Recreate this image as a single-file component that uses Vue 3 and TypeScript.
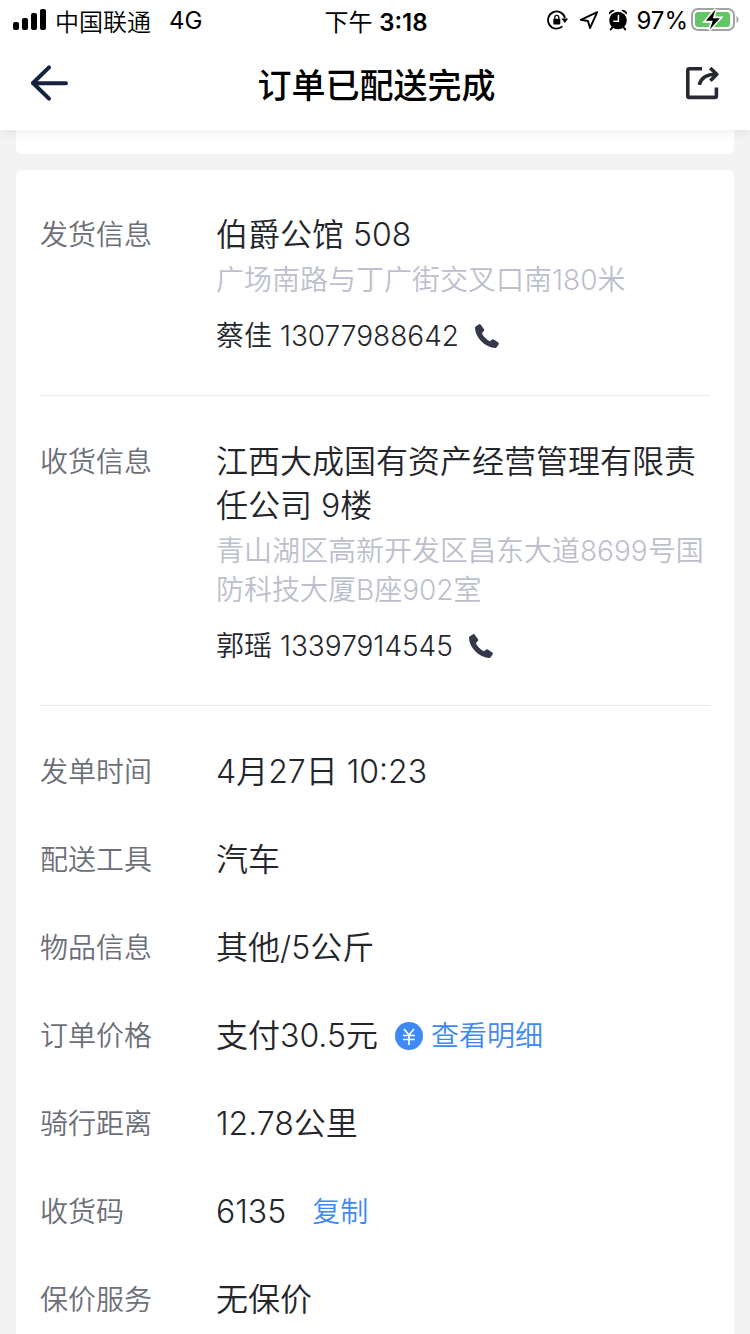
<script setup lang="ts">
interface Contact {
  label: string
  place: string
  address: string
  name: string
  phone: string
}
interface Detail {
  label: string
  value: string
  action?: string
  icon?: boolean
}

const contacts: Contact[] = [
  { label: '发货信息', place: '伯爵公馆 508', address: '广场南路与丁广街交叉口南180米', name: '蔡佳', phone: '13077988642' },
  { label: '收货信息', place: '江西大成国有资产经营管理有限责任公司 9楼', address: '青山湖区高新开发区昌东大道8699号国防科技大厦B座902室', name: '郭瑶', phone: '13397914545' },
]

const details: Detail[] = [
  { label: '发单时间', value: '4月27日 10:23' },
  { label: '配送工具', value: '汽车' },
  { label: '物品信息', value: '其他/5公斤' },
  { label: '订单价格', value: '支付30.5元', action: '查看明细', icon: true },
  { label: '骑行距离', value: '12.78公里' },
  { label: '收货码', value: '6135', action: '复制' },
  { label: '保价服务', value: '无保价' },
]
</script>

<template>
  <div class="page">
    <header class="top">
      <div class="status">
        <div class="status-side">
          <svg class="signal" width="34" height="22" viewBox="0 0 34 22">
            <rect x="0" y="13" width="6" height="8" rx="2" />
            <rect x="9" y="9" width="6" height="12" rx="2" />
            <rect x="18" y="4" width="6" height="17" rx="2" />
            <rect x="27" y="0" width="6" height="21" rx="2" />
          </svg>
          <span class="carrier">中国联通</span>
          <span>4G</span>
        </div>
        <div class="time">下午 <b>3:18</b></div>
        <div class="status-side right">
          <svg width="22" height="20" viewBox="0 0 22 20">
            <path d="M15.4 16.4A8.6 8.6 0 1 1 18 8" fill="none" stroke="#000" stroke-width="1.8" />
            <path d="M14.4 8.4h6.8l-3.4 4.6z" />
            <rect x="6.3" y="8.8" width="7" height="5.6" rx="0.8" />
            <path d="M7.8 9.5V7.3a2 2 0 0 1 4 0v2.2" fill="none" stroke="#000" stroke-width="1.3" />
          </svg>
          <svg class="locate" width="20" height="20" viewBox="0 0 20 20">
            <path d="M18.2 2.2 1.8 9.8 9 11 11 18z" fill="none" stroke="#000" stroke-width="1.9" stroke-linejoin="round" />
          </svg>
          <svg class="alarm" width="20" height="22" viewBox="0 0 20 22">
            <circle cx="10" cy="11.5" r="8.8" />
            <path d="M1 5.4C.6 2.6 3.4.2 6.6 1.4zM19 5.4C19.4 2.6 16.6.2 13.4 1.4z" />
            <path d="M4.7 18 2.8 20.4M15.3 18l1.9 2.4" stroke="#000" stroke-width="2" stroke-linecap="round" />
            <path d="M10.4 5.8v6.4H5.2" stroke="#fff" stroke-width="1.5" fill="none" />
          </svg>
          <span class="percent">97%</span>
          <svg class="battery" width="48" height="24" viewBox="0 0 48 24">
            <rect x="1" y="1" width="42" height="21" rx="6" fill="#fff" stroke="#a3a3a3" stroke-width="2" />
            <rect x="4" y="4" width="35" height="15" rx="3.5" fill="#63c666" />
            <path d="M45.5 8v7c2.7-1.4 2.7-5.6 0-7z" fill="#a3a3a3" />
            <path d="M24.6 1.2 14 13.4h7L18.4 22 29.6 9.8h-7z" stroke="#fff" stroke-width="2.6" fill="#fff" />
            <path d="M24.6 1.6 14.8 12.8h7L18.8 21.5 28.8 10.3h-7z" />
          </svg>
        </div>
      </div>
      <div class="nav">
        <button class="icon-button" aria-label="返回">
          <svg width="38" height="36" viewBox="0 0 38 36" fill="none" stroke="#14213f" stroke-width="4" stroke-linecap="round" stroke-linejoin="round">
            <path d="M19 2.4 3 18l16 15.6M3 18.2H36" />
          </svg>
        </button>
        <h1>订单已配送完成</h1>
        <button class="icon-button" aria-label="分享">
          <svg width="34" height="34" viewBox="0 0 34 34" fill="none" stroke="#272a33" stroke-width="3.6">
            <path d="M17 2.8H4.2Q2.8 2.8 2.8 4.2V30Q2.8 31.4 4.2 31.4H30Q31.4 31.4 31.4 30V21.4" />
            <path d="M14.3 18.8C16 11.8 21.4 8.2 31 8.2" />
            <path d="M25.2 2 31.8 8.2 25.4 14.8" stroke-linejoin="round" />
          </svg>
        </button>
      </div>
    </header>

    <main>
      <section class="card previous"></section>
      <section class="card">
        <div v-for="c in contacts" :key="c.label" class="contact">
          <div class="label">{{ c.label }}</div>
          <div class="body">
            <div class="value">{{ c.place }}</div>
            <div class="address">{{ c.address }}</div>
            <div class="person">
              <span>{{ c.name }} {{ c.phone }}</span>
              <a class="call" :href="'tel:' + c.phone" :aria-label="'拨打 ' + c.phone">
                <svg width="24" height="24" viewBox="0 0 24 24">
                  <path d="M1 2.3 4.2.2Q5.1-.2 5.8.7L9 5.3Q9.6 6.2 8.8 7L7 8.9Q6.8 10.3 9.5 13.2 12.7 16.5 15.1 17.2L17.1 15.5Q17.9 14.9 18.8 15.5L23.3 18.6Q24.2 19.3 23.7 20.2L21.9 22.9Q21.2 24 19.7 23.9C14.5 23.6 9.8 20.8 6 16.9 2.1 12.8.1 8.2 0 4Q0 2.9 1 2.3z" fill="#33384b" />
                </svg>
              </a>
            </div>
          </div>
        </div>
        <div class="details">
          <div v-for="d in details" :key="d.label" class="detail">
            <div class="label">{{ d.label }}</div>
            <div class="value">{{ d.value }}</div>
            <button v-if="d.action" class="action" :class="{ priced: d.icon }">
              <svg v-if="d.icon" width="28" height="28" viewBox="0 0 28 28">
                <circle cx="14" cy="14" r="14" fill="#3d89f7" />
                <path d="M9 7l5 6 5-6M8 13.5h12M8 17.5h12M14 13v10" fill="none" stroke="#fff" stroke-width="1.7" />
              </svg>
              {{ d.action }}
            </button>
          </div>
        </div>
      </section>
    </main>
  </div>
</template>

<style>
body {
  background: #f3f3f3;
}
</style>

<style scoped>
.page {
  height: 100vh;
  overflow: hidden;
  background: #f3f3f3;
  color: #23262b;
  font-family: "Inter", "Noto Sans CJK SC", sans-serif;
  font-weight: 350;
}
.top {
  position: relative;
  background: #fff;
  box-shadow: 0 2px 10px rgba(0, 0, 0, 0.07);
}
.status {
  display: grid;
  grid-template-columns: 1fr auto 1fr;
  align-items: center;
  height: 40px;
  padding: 0 11px 0 13px;
  color: #000;
  font-size: 24px;
  font-weight: 400;
  white-space: nowrap;
}
.status-side {
  display: flex;
  align-items: center;
}
.right {
  justify-content: flex-end;
}
.carrier {
  margin: 0 18px 0 8px;
  font-weight: 350;
}
.time b {
  font-weight: 600;
}
.locate {
  margin-left: 10px;
}
.alarm {
  margin-left: 9px;
}
.percent {
  margin: 0 3px 0 8px;
}
.nav {
  display: flex;
  align-items: center;
  justify-content: space-between;
  height: 86px;
  padding: 0 31px 4px 30px;
  color: #000;
}
h1 {
  margin: 0;
  font-size: 34px;
  font-weight: 500;
}
button {
  padding: 0;
  border: 0;
  background: none;
  font: inherit;
  cursor: pointer;
}
.icon-button {
  display: flex;
}
main {
  padding: 0 16px;
}
.card {
  border-radius: 6px;
  background: #fff;
}
.previous {
  height: 24px;
  margin-bottom: 16px;
  border-radius: 0 0 6px 6px;
}
.card:last-child {
  padding: 0 24px;
}
.contact {
  display: flex;
  padding: 44px 0 39px;
  border-bottom: 1px solid #e8e8ea;
}
.contact:first-child {
  padding-top: 43px;
}
.label {
  flex: none;
  width: 176px;
  color: #6c6f78;
  font-size: 28px;
  line-height: 44px;
}
.body {
  flex: 1;
  min-width: 0;
}
.value {
  font-size: 32px;
  line-height: 44px;
}
.address {
  margin: 4px 0 16px;
  color: #bdbfcd;
  font-size: 28px;
  line-height: 39px;
}
.person {
  display: flex;
  align-items: center;
  font-size: 28px;
  line-height: 40px;
}
.call {
  display: flex;
  margin-left: 16px;
}
.details {
  padding-top: 22px;
}
.detail {
  display: flex;
  align-items: center;
  height: 88px;
}
.action {
  display: flex;
  align-items: center;
  gap: 8px;
  margin-left: 26px;
  color: #3d89f7;
  font-size: 28px;
  line-height: 44px;
}
.priced {
  margin-left: 17px;
}
</style>
